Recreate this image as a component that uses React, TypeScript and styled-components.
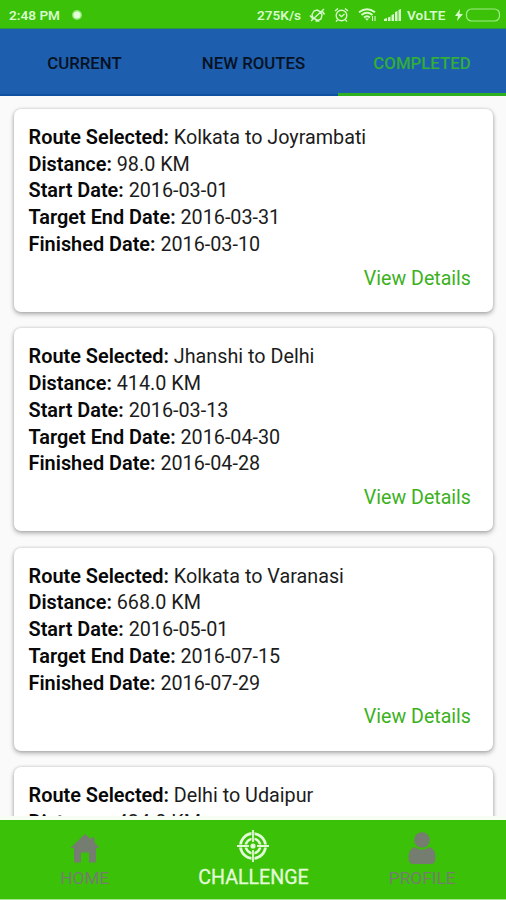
import React from 'react';
import styled, { createGlobalStyle } from 'styled-components';

const GlobalStyle = createGlobalStyle`
  * { box-sizing: border-box; }
  html, body { margin: 0; padding: 0; overflow: hidden; }
  body { font-family: Roboto, "Liberation Sans", sans-serif; background: #f9faf9; }
`;

const Screen = styled.div`
  width: 506px;
  height: 900px;
  display: flex;
  flex-direction: column;
  overflow: hidden;
  background: #f9faf9;
`;

const StatusBar = styled.header`
  flex: none;
  height: 29px;
  padding: 1px 5px 0 9px;
  display: flex;
  align-items: center;
  background: #3ac108;
  border-bottom: 1px solid #279a3f;
  color: #d6fac9;
  font-size: 13.6px;
  font-weight: 600;
  line-height: 28px;
  white-space: nowrap;
  svg { display: block; flex: none; }
`;

const Clock = styled.span`
  width: 52px;
  margin-right: 10px;
`;

const StatusIcons = styled.div`
  margin-left: auto;
  display: flex;
  align-items: center;
`;

const Speed = styled.span`
  width: 45px;
  margin-right: 7px;
`;

const Network = styled.span`
  width: 40px;
  margin: 0 8px 0 5px;
  letter-spacing: 0.1px;
`;

const Slot = styled.span<{ $gap: number }>`
  margin-right: ${(p) => p.$gap}px;
`;

const Tabs = styled.nav`
  flex: none;
  height: 67px;
  display: grid;
  grid-template-columns: 169px 169px 168px;
  background: #1d5fae;
`;

const Tab = styled.button<{ $active?: boolean }>`
  border: 0;
  border-bottom: ${(p) => (p.$active ? '3px solid #2fb01f' : '2px solid #0f50a0')};
  padding: ${(p) => (p.$active ? '3px' : '2px')} 0 0;
  background: none;
  color: ${(p) => (p.$active ? '#31ae37' : '#061224')};
  font: 500 16.8px/20px Roboto, sans-serif;
`;

const List = styled.main`
  flex: none;
  height: 720px;
  padding: 13px 13px 0 14px;
  display: flex;
  flex-direction: column;
  gap: 16.4px;
  overflow: hidden;
`;

const Card = styled.article`
  flex: none;
  height: 203px;
  padding: 16px 22px 0 14.5px;
  border-radius: 7px;
  background: #fff;
  box-shadow: 0 2px 5px rgba(0, 0, 0, 0.32), 0 0 3px rgba(0, 0, 0, 0.14);
  color: #1c1c1c;
  font-size: 19.75px;
  line-height: 26.7px;
`;

const Field = styled.div`
  white-space: nowrap;
`;

const Label = styled.b`
  color: #080808;
  font-size: 19.9px;
  font-weight: 600;
`;

const Details = styled.a`
  display: block;
  margin-top: 7px;
  text-align: right;
  color: #3bb11d;
  font-size: 19.6px;
`;

const BottomNav = styled.nav`
  flex: none;
  height: 84px;
  display: grid;
  grid-template-columns: repeat(3, 1fr);
  background: #3ac108;
  border-top: 4px solid #f6fdf2;
  border-bottom: 1px solid #a9e694;
`;

const NavItem = styled.a<{ $active?: boolean }>`
  display: flex;
  flex-direction: column;
  align-items: center;
  padding: ${(p) => (p.$active ? 10 : 12)}px 0 0 1px;
  color: ${(p) => (p.$active ? '#e3fad8' : '#757d70')};
  font-size: ${(p) => (p.$active ? 19.6 : 17.3)}px;
  line-height: 24px;
  svg { display: block; height: 32px; }
`;

const NavText = styled.span<{ $active?: boolean }>`
  margin-top: ${(p) => (p.$active ? 4 : 2)}px;
  -webkit-text-stroke: ${(p) => (p.$active ? '0.3px' : '0')} currentColor;
`;

const Notification = () => (
  <svg width="12" height="14" viewBox="0 0 12 14">
    <circle cx="6" cy="7" r="5" fill="#8ae86d" />
    <circle cx="6" cy="7" r="3.6" fill="#e3ffd9" />
  </svg>
);

const Muted = () => (
  <svg width="17" height="16" viewBox="0 0 17 16" fill="none" stroke="currentColor" strokeWidth="1.4">
    <path d="M4 11 3 7.5 5 4l3-1 4 2 1 3-1 4-3 1.5Z M2 14 15 2 M1 8.5l2.500 3 M13.5 4.5l2 3 M6.5 14h4" />
  </svg>
);

const Alarm = () => (
  <svg width="15" height="16" viewBox="0 0 15 16" fill="none" stroke="currentColor" strokeWidth="1.4">
    <circle cx="7.5" cy="8.5" r="5.3" />
    <path d="m5 7.5 2.5 2L10.5 7M1 4l3-2.5M14 4l-3-2.5M3.5 13 2 14.5M11.5 13l1.5 1.5" />
  </svg>
);

const Wifi = () => (
  <svg width="19" height="15" viewBox="0 0 19 15" fill="none" stroke="currentColor" strokeWidth="1.9">
    <path d="M1 5.3Q9 -1 17 5.3M3.5 8Q9 3.5 14.5 8M6 10.5q3-2.5 6 0" />
    <path d="m7 11.6 2 2.2 2-2.2Z" fill="currentColor" stroke="none" />
    <path d="M14.5 9v5M17 9v5" strokeWidth="1.1" />
  </svg>
);

const Signal = () => (
  <svg width="18" height="12" viewBox="0 0 18 12" fill="currentColor">
    <path d="M0 10 3 9v3H0ZM4 8.5 6.5 7.5V12H4ZM7.5 6 10 5v7H7.5ZM11 3l2.5-1v10H11ZM14.5 1 17 0v12h-2.5Z" />
  </svg>
);

const Battery = () => (
  <svg width="46" height="14" viewBox="0 0 46 14">
    <path d="M5 1 0 8h3l-1 5 6-7H4.5Z" fill="currentColor" />
    <rect x="11.5" y="1" width="33" height="12" rx="5" fill="none" stroke="#a2ed88" strokeWidth="1.2" />
  </svg>
);

const Home = () => (
  <svg width="30" height="32" viewBox="0 0 30 32" fill="currentColor">
    <path d="m15 2 6 5.3V5.5h3.5v5L29.5 16H26v13.5q0 1-1 1h-6v-10h-8v10H5q-1 0-1-1V16H.5Z" />
  </svg>
);

const Target = () => (
  <svg width="32" height="32" viewBox="0 0 32 32" fill="none" stroke="currentColor">
    <circle cx="16" cy="16" r="12.5" strokeWidth="2.8" />
    <circle cx="16" cy="16" r="7.3" strokeWidth="2.6" />
    <path d="M16 0v12M16 20v12M0 16h12M20 16h12" stroke="#3ac108" strokeWidth="3" />
    <path d="M16 0v12M16 20v12M0 16h12M20 16h12" strokeWidth="1.8" />
    <circle cx="16" cy="16" r="2.6" fill="currentColor" stroke="none" />
  </svg>
);

const Person = () => (
  <svg width="28" height="32" viewBox="0 0 28 32" fill="currentColor">
    <circle cx="14" cy="8" r="7.8" />
    <path d="M6.5 15q7.5 5.5 15 0 6 2 6 11 0 6-5 6h-17q-5 0-5-6 0-9 6-11Z" />
  </svg>
);

const routes = [
  ['Kolkata to Joyrambati', '98.0 KM', '2016-03-01', '2016-03-31', '2016-03-10'],
  ['Jhanshi to Delhi', '414.0 KM', '2016-03-13', '2016-04-30', '2016-04-28'],
  ['Kolkata to Varanasi', '668.0 KM', '2016-05-01', '2016-07-15', '2016-07-29'],
  ['Delhi to Udaipur', '424.0 KM'],
];

const labels = ['Route Selected:', 'Distance:', 'Start Date:', 'Target End Date:', 'Finished Date:'];

export default function App() {
  return (
    <Screen>
      <GlobalStyle />
      <StatusBar>
        <Clock>2:48 PM</Clock>
        <Notification />
        <StatusIcons>
          <Speed>275K/s</Speed>
          <Slot $gap={8}><Muted /></Slot>
          <Slot $gap={9}><Alarm /></Slot>
          <Slot $gap={7}><Wifi /></Slot>
          <Signal />
          <Network>VoLTE</Network>
          <Battery />
        </StatusIcons>
      </StatusBar>
      <Tabs>
        <Tab>CURRENT</Tab>
        <Tab>NEW ROUTES</Tab>
        <Tab $active>COMPLETED</Tab>
      </Tabs>
      <List>
        {routes.map((values) => (
          <Card key={values[0]}>
            {values.map((value, i) => (
              <Field key={labels[i]}>
                <Label>{labels[i]}</Label> {value}
              </Field>
            ))}
            {values.length === labels.length && <Details>View Details</Details>}
          </Card>
        ))}
      </List>
      <BottomNav>
        <NavItem><Home /><NavText>HOME</NavText></NavItem>
        <NavItem $active><Target /><NavText $active>CHALLENGE</NavText></NavItem>
        <NavItem><Person /><NavText>PROFILE</NavText></NavItem>
      </BottomNav>
    </Screen>
  );
}
